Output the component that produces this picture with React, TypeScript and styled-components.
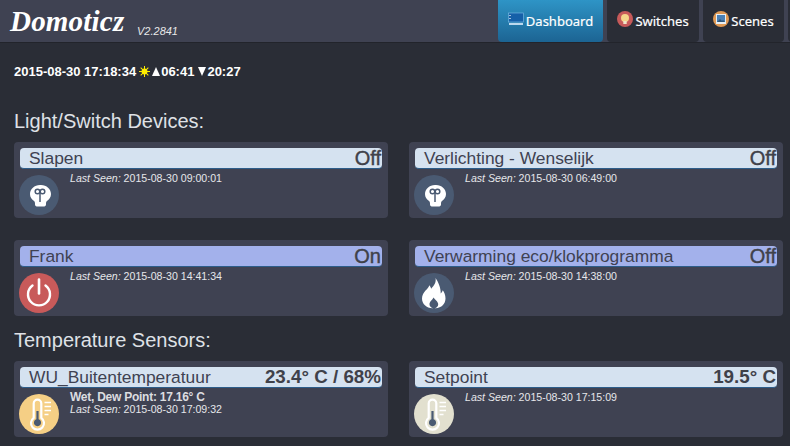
import React from 'react';
import styled, { createGlobalStyle } from 'styled-components';

type IconKind = 'bulb' | 'power' | 'flame' | 'temp';

interface Device {
  name: string;
  status: string;
  seen: string;
  icon: IconKind;
  on?: boolean;
  bubble: string;
  note?: string;
  mercury?: string;
}

const lightDevices: Device[] = [
  { name: 'Slapen', status: 'Off', seen: '2015-08-30 09:00:01', icon: 'bulb', bubble: '#4a5a72' },
  { name: 'Verlichting - Wenselijk', status: 'Off', seen: '2015-08-30 06:49:00', icon: 'bulb', bubble: '#4a5a72' },
  { name: 'Frank', status: 'On', seen: '2015-08-30 14:41:34', icon: 'power', on: true, bubble: '#c85a5a' },
  { name: 'Verwarming eco/klokprogramma', status: 'Off', seen: '2015-08-30 14:38:00', icon: 'flame', on: true, bubble: '#4a5a72' },
];

const tempDevices: Device[] = [
  {
    name: 'WU_Buitentemperatuur',
    status: '23.4° C / 68%',
    seen: '2015-08-30 17:09:32',
    icon: 'temp',
    bubble: '#f5cf85',
    note: 'Wet, Dew Point: 17.16° C',
    mercury: '#4a5a72',
  },
  { name: 'Setpoint', status: '19.5° C', seen: '2015-08-30 17:15:09', icon: 'temp', bubble: '#e2e0cf', mercury: '#4a5a72' },
];

const GlobalStyle = createGlobalStyle`
  html, body {
    margin: 0;
    padding: 0;
    height: 446px;
    overflow: hidden;
    background: #2a2d36;
    font-family: "Liberation Sans", Arial, sans-serif;
  }
`;

const Header = styled.header`
  display: flex;
  justify-content: space-between;
  height: 42px;
  background: #3f4252;
  border-bottom: 1px solid #22242b;
`;

const Brand = styled.div`
  display: flex;
  align-items: flex-end;
  padding: 0 0 5px 10px;
`;

const Logo = styled.span`
  display: block;
  width: 127px;
  font-family: "Liberation Serif", serif;
  font-style: italic;
  font-weight: 700;
  font-size: 29px;
  line-height: 32px;
  letter-spacing: 0.2px;
  color: #fff;
`;

const Version = styled.span`
  font-size: 11px;
  font-style: italic;
  line-height: 12px;
  color: #e8e8e8;
`;

const Nav = styled.nav`
  display: flex;
  gap: 4px;
  margin-right: -18px;
`;

const Tab = styled.a<{ $active?: boolean; $width: number }>`
  display: flex;
  align-items: center;
  justify-content: center;
  gap: 2px;
  box-sizing: border-box;
  width: ${({ $width }) => $width}px;
  height: 42px;
  border-radius: 0 0 4px 4px;
  background: ${({ $active }) => ($active ? 'linear-gradient(#2e94c6, #1c6493)' : '#2a2d36')};
  font-family: "Noto Sans", sans-serif;
  font-size: 13px;
  color: #fff;
  -webkit-text-stroke: 0.2px #fff;
  svg {
    margin-top: -5px;
  }
`;

const Content = styled.main`
  padding: 0 7px 0 14px;
`;

const Clock = styled.div`
  display: flex;
  align-items: center;
  height: 14px;
  margin-top: 21px;
  font-size: 13px;
  font-weight: 700;
  color: #fff;
`;

const Sun = styled.span`
  margin: 0 2px 0 3px;
  line-height: 14px;
  svg {
    display: block;
  }
`;

const Arrow = styled.span<{ $gap?: number }>`
  display: block;
  width: 0;
  height: 0;
  margin: 0 1px 0 ${({ $gap }) => $gap ?? 0}px;
`;

const ArrowUp = styled(Arrow)`
  border-left: 4px solid transparent;
  border-right: 4px solid transparent;
  border-bottom: 9px solid #fff;
`;

const ArrowDown = styled(Arrow)`
  border-left: 4px solid transparent;
  border-right: 4px solid transparent;
  border-top: 9px solid #fff;
`;

const Heading = styled.h2<{ $top: number }>`
  margin: ${({ $top }) => $top}px 0 10px;
  font-size: 20px;
  font-weight: 400;
  line-height: 21px;
  color: #dfe1e6;
`;

const Grid = styled.section`
  display: grid;
  grid-template-columns: repeat(2, 374px);
  column-gap: 21px;
  row-gap: 22px;
`;

const Card = styled.article`
  box-sizing: border-box;
  height: 76px;
  padding: 6px 6px 0 5px;
  border-radius: 4px;
  background: #3f4252;
`;

const TitleBar = styled.div<{ $on?: boolean }>`
  display: flex;
  justify-content: space-between;
  align-items: center;
  box-sizing: border-box;
  height: 21px;
  margin-left: 1px;
  padding: 0 1px 0 9px;
  border-radius: 4px;
  border-bottom: 1px solid #2d5d8a;
  background: ${({ $on }) => ($on ? '#a3b1eb' : '#d5e2f0')};
  color: #3f4252;
`;

const Name = styled.span`
  font-size: 17.4px;
  line-height: 20px;
`;

const Status = styled.span<{ $reading?: boolean }>`
  font-size: ${({ $reading }) => ($reading ? 18.8 : 20)}px;
  font-weight: ${({ $reading }) => ($reading ? 700 : 400)};
  -webkit-text-stroke: ${({ $reading }) => ($reading ? '0' : '0.4px')};
  line-height: 20px;
  color: #3f414a;
`;

const Body = styled.div`
  display: flex;
  gap: 11px;
  margin-top: 6px;
`;

const Bubble = styled.div<{ $color: string }>`
  flex: none;
  width: 40px;
  height: 40px;
  border-radius: 50%;
  background: ${({ $color }) => $color};
  svg {
    display: block;
  }
`;

const Info = styled.div`
  margin-top: -2px;
  font-size: 10.6px;
  line-height: 10px;
  color: #e6e7ea;
`;

const Note = styled.div`
  margin-bottom: 1px;
  font-size: 12px;
  font-weight: 700;
  line-height: 11px;
  letter-spacing: -0.25px;
  color: #dcdde0;
`;

const SeenLabel = styled.em`
  font-style: italic;
`;

const DeviceIcon: React.FC<{ kind: IconKind; mercury?: string }> = ({ kind, mercury }) => {
  if (kind === 'bulb') {
    return (
      <svg width="40" height="40" viewBox="0 0 40 40">
        <path
          d="M21 10c-5.600 0-10 4-10 9 0 3.300 1.700 5.300 3.700 6.800 1 .8 1.300 1.700 1.300 3v.7c0 1.200.8 1.800 1.700 2h7.600c.9-.2 1.700-.8 1.700-2v-.7c0-1.300.3-2.200 1.300-3 2-1.500 3.700-3.500 3.700-6.800 0-5-4.400-9-10-9z"
          fill="#fff"
        />
        <circle cx="18.500" cy="16.500" r="2.300" fill="none" stroke="#4a5a72" strokeWidth="1.500" />
        <circle cx="23.500" cy="16.500" r="2.300" fill="none" stroke="#4a5a72" strokeWidth="1.500" />
        <path d="M21 17v10" fill="none" stroke="#4a5a72" strokeWidth="1.500" />
      </svg>
    );
  }
  if (kind === 'power') {
    return (
      <svg width="40" height="40" viewBox="0 0 40 40" fill="none" stroke="#fff">
        <path d="M13.500 12.500a11 11 0 1 0 13 0" strokeWidth="2.400" strokeLinecap="round" />
        <path d="M20 6.500v14" strokeWidth="2.600" strokeLinecap="round" />
      </svg>
    );
  }
  if (kind === 'flame') {
    return (
      <svg width="40" height="40" viewBox="0 0 40 40">
        <path
          fillRule="evenodd"
          d="M21.500 5c1 5-1.800 7.700-4.300 10.700-.4-1.600-1.100-2.700-2-3.500C15.100 15.700 8 18.600 8 25.500 8 31 12.400 35 18.500 35.300h3C27.600 35 31.500 30.600 31.500 25.500c0-3.500-1.300-6.300-2.800-8.200-.4 1.400-1 2.400-2 3.200C27 14.800 24 8.500 21.500 5zM19.700 24.500c-1.400 2.400-4.200 4-4.200 6.800 0 2 1.500 3.500 3.700 4h1.500c2.200-.5 3.500-2 3.500-4 0-2.800-3.200-4.300-4.500-6.800z"
          fill="#fff"
        />
      </svg>
    );
  }
  return (
    <svg width="40" height="40" viewBox="0 0 40 40">
      <path
        d="M14.700 9.500a3.800 3.800 0 0 1 7.600 0v14.300a6.500 6.500 0 1 1-7.600 0z"
        fill="none"
        stroke="#fff"
        strokeWidth="2.200"
      />
      <path d="M17.400 17h2.200v8.300a3.600 3.600 0 1 1-2.200 0z" fill={mercury} />
      <path d="M25.500 8.500h6.500M25.500 12.500h6.500M25.500 16.500h6.500M25.500 20.500h4" stroke="#fff" strokeWidth="1.600" />
    </svg>
  );
};

const DeviceCard: React.FC<{ device: Device }> = ({ device }) => (
  <Card>
    <TitleBar $on={device.on}>
      <Name>{device.name}</Name>
      <Status $reading={device.icon === 'temp'}>{device.status}</Status>
    </TitleBar>
    <Body>
      <Bubble $color={device.bubble}>
        <DeviceIcon kind={device.icon} mercury={device.mercury} />
      </Bubble>
      <Info>
        {device.note && <Note>{device.note}</Note>}
        <SeenLabel>Last Seen:</SeenLabel> {device.seen}
      </Info>
    </Body>
  </Card>
);

const App: React.FC = () => {
  return (
    <>
      <GlobalStyle />
      <Header>
        <Brand>
          <Logo>Domoticz</Logo>
          <Version>V2.2841</Version>
        </Brand>
        <Nav>
          <Tab $active $width={105}>
            <svg width="16" height="14" viewBox="0 0 16 14">
              <rect x="0.500" y="1" width="15" height="9" fill="#1560a8" />
              <rect x="0.500" y="1" width="15" height="9" fill="none" stroke="#7fc0ea" strokeWidth="0.600" />
              <path d="M1 11h14v2H1z" fill="#bcd8ee" />
              <path d="M2 3v1M2 6v1" stroke="#fff" strokeWidth="1.200" />
            </svg>
            Dashboard
          </Tab>
          <Tab $width={92}>
            <svg width="16" height="16" viewBox="0 0 16 16">
              <circle cx="8" cy="8" r="8" fill="#c75a5a" />
              <circle cx="8" cy="7" r="4" fill="#f5d58a" />
              <rect x="6.300" y="10" width="3.400" height="3" fill="#f0e6c8" />
            </svg>
            Switches
          </Tab>
          <Tab $width={81}>
            <svg width="16" height="16" viewBox="0 0 16 16">
              <circle cx="8" cy="8" r="8" fill="#e09a55" />
              <rect x="3" y="3" width="10" height="10" fill="#e8eef2" />
              <rect x="4" y="4" width="8" height="7" fill="#4a80b5" />
              <path d="M4 11l3-3 2 2 1-1 2 2z" fill="#2f5578" />
            </svg>
            Scenes
          </Tab>
          <Tab $width={20} />
        </Nav>
      </Header>
      <Content>
        <Clock>
          2015-08-30 17:18:34
          <Sun>
            <svg width="11" height="11" viewBox="0 0 12 12">
              <circle cx="6" cy="6" r="3.200" fill="#ffee00" />
              <path d="M6 0v12M0 6h12M1.800 1.800l8.400 8.400M10.200 1.800l-8.400 8.400" stroke="#ffee00" strokeWidth="1.100" />
            </svg>
          </Sun>
          <ArrowUp />
          06:41
          <ArrowDown $gap={4} />
          20:27
        </Clock>
        <Heading $top={33}>Light/Switch Devices:</Heading>
        <Grid>
          {lightDevices.map((device) => (
            <DeviceCard key={device.name} device={device} />
          ))}
        </Grid>
        <Heading $top={14}>Temperature Sensors:</Heading>
        <Grid>
          {tempDevices.map((device) => (
            <DeviceCard key={device.name} device={device} />
          ))}
        </Grid>
      </Content>
    </>
  );
};

export default App;
